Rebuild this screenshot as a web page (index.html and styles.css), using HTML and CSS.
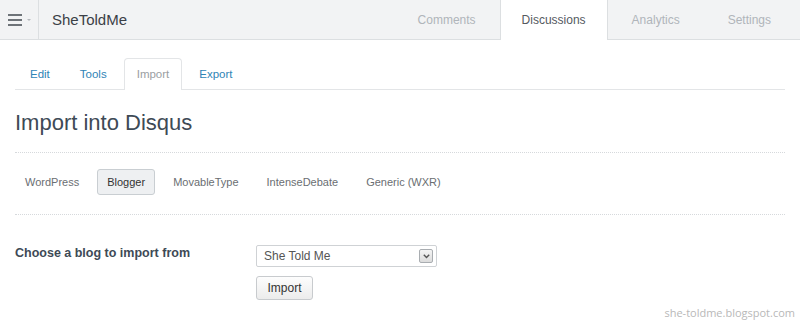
FILE: index.html
```html
<!DOCTYPE html>
<html lang="en">
<head>
  <meta charset="UTF-8">
  <title>Import into Disqus</title>
  <link rel="stylesheet" href="styles.css">
</head>
<body>
  <div class="topbar">
    <div class="menu">
      <span class="burger"><i></i><i></i><i></i></span>
      <span class="caret"></span>
    </div>
    <div class="brand">SheToldMe</div>
    <ul class="mainnav">
      <li>Comments</li>
      <li class="active">Discussions</li>
      <li>Analytics</li>
      <li>Settings</li>
    </ul>
  </div>

  <div class="content">
    <ul class="subnav">
      <li>Edit</li>
      <li>Tools</li>
      <li class="active">Import</li>
      <li>Export</li>
    </ul>

    <h1>Import into Disqus</h1>

    <ul class="platforms">
      <li>WordPress</li>
      <li class="active">Blogger</li>
      <li>MovableType</li>
      <li>IntenseDebate</li>
      <li>Generic (WXR)</li>
    </ul>

    <div class="form-row">
      <label class="label">Choose a blog to import from</label>
      <div class="controls">
        <div class="select">
          <span>She Told Me</span>
          <span class="arrow">
            <svg width="7" height="5" viewBox="0 0 7 5"><path d="M0.8 0.8 L3.5 3.6 L6.2 0.8" fill="none" stroke="#555" stroke-width="1.4"/></svg>
          </span>
        </div>
        <button class="btn">Import</button>
      </div>
    </div>
  </div>

  <div class="watermark">she-toldme.blogspot.com</div>
</body>
</html>
```

FILE: styles.css
```css
body {
  margin: 0;
  font-family: "Liberation Sans", Arial, sans-serif;
  background: #fff;
  color: #333;
  height: 324px;
  overflow: hidden;
  position: relative;
}
ul {
  list-style: none;
  margin: 0;
  padding: 0;
}

/* top bar */
.topbar {
  display: flex;
  height: 39px;
  background: #f2f3f4;
  border-bottom: 1px solid #dcdfe1;
}
.menu {
  width: 39px;
  border-right: 1px solid #dcdfe1;
  display: flex;
  align-items: center;
  padding-left: 8px;
  box-sizing: border-box;
}
.burger {
  display: flex;
  flex-direction: column;
  gap: 3px;
}
.burger i {
  display: block;
  width: 14px;
  height: 2px;
  background: #6e7378;
}
.caret {
  margin-left: 5px;
  width: 0;
  height: 0;
  border-left: 2px solid transparent;
  border-right: 2px solid transparent;
  border-top: 2px solid #b5b9bd;
}
.brand {
  display: flex;
  align-items: center;
  padding-left: 13px;
  font-size: 15px;
  color: #3b4046;
}
.mainnav {
  display: flex;
  margin-left: auto;
  padding-right: 5px;
}
.mainnav li {
  display: flex;
  align-items: center;
  padding: 0 24px;
  font-size: 12px;
  color: #b0b5ba;
}
.mainnav li.active {
  background: #fff;
  color: #555a5f;
  border-left: 1px solid #dcdfe1;
  border-right: 1px solid #dcdfe1;
  margin-bottom: -1px;
  padding: 0 21px;
}

/* content */
.content {
  padding: 0 15px;
}
.subnav {
  display: flex;
  margin-top: 18px;
  padding-left: 2px;
  border-bottom: 1px solid #e3e5e7;
}
.subnav li {
  height: 30px;
  line-height: 31px;
  padding: 0 12px;
  margin-right: 4px;
  font-size: 11.5px;
  color: #2f84b6;
  border: 1px solid transparent;
  border-bottom: none;
}
.subnav li.active {
  color: #9a9ea2;
  background: #fff;
  border-color: #e3e5e7;
  border-radius: 4px 4px 0 0;
  margin-bottom: -1px;
  height: 31px;
}
h1 {
  margin: 20px 0 16px;
  font-size: 22px;
  line-height: 26px;
  font-weight: normal;
  color: #3e4a56;
}
.platforms {
  display: flex;
  gap: 8px;
  padding: 16px 0 19px;
  border-top: 1px dotted #d6d9dc;
  border-bottom: 1px dotted #d6d9dc;
}
.platforms li {
  height: 24px;
  line-height: 24px;
  padding: 0 9px;
  font-size: 11px;
  color: #6a6e72;
  border: 1px solid transparent;
  border-radius: 3px;
}
.platforms li.active {
  background: #eef0f2;
  border-color: #c9ced2;
  color: #333;
}
.form-row {
  display: grid;
  grid-template-columns: 241px 181px;
  margin-top: 30px;
}
.label {
  font-size: 12.5px;
  font-weight: bold;
  line-height: 16px;
  color: #3e4a56;
}
.controls {
  display: flex;
  flex-direction: column;
  align-items: flex-start;
  gap: 9px;
}
.select {
  width: 181px;
  height: 22px;
  box-sizing: border-box;
  border: 1px solid #cfd2d5;
  border-radius: 2px;
  display: flex;
  align-items: center;
  justify-content: space-between;
  padding: 0 3px 0 7px;
  font-size: 12px;
  color: #555;
}
.arrow {
  width: 14px;
  height: 14px;
  box-sizing: border-box;
  border: 1px solid #a9adb1;
  border-radius: 2px;
  background: linear-gradient(#f4f4f4, #dcdcdc);
  display: flex;
  align-items: center;
  justify-content: center;
}
.btn {
  width: 57px;
  height: 24px;
  font-family: inherit;
  font-size: 12px;
  color: #333;
  background: linear-gradient(#fdfdfd, #ececec);
  border: 1px solid #c8cbce;
  border-radius: 3px;
  padding: 0;
}
.watermark {
  position: absolute;
  right: 5px;
  bottom: 4px;
  font-family: "Open Sans", sans-serif;
  font-size: 11px;
  color: #b8b8b8;
}
```
